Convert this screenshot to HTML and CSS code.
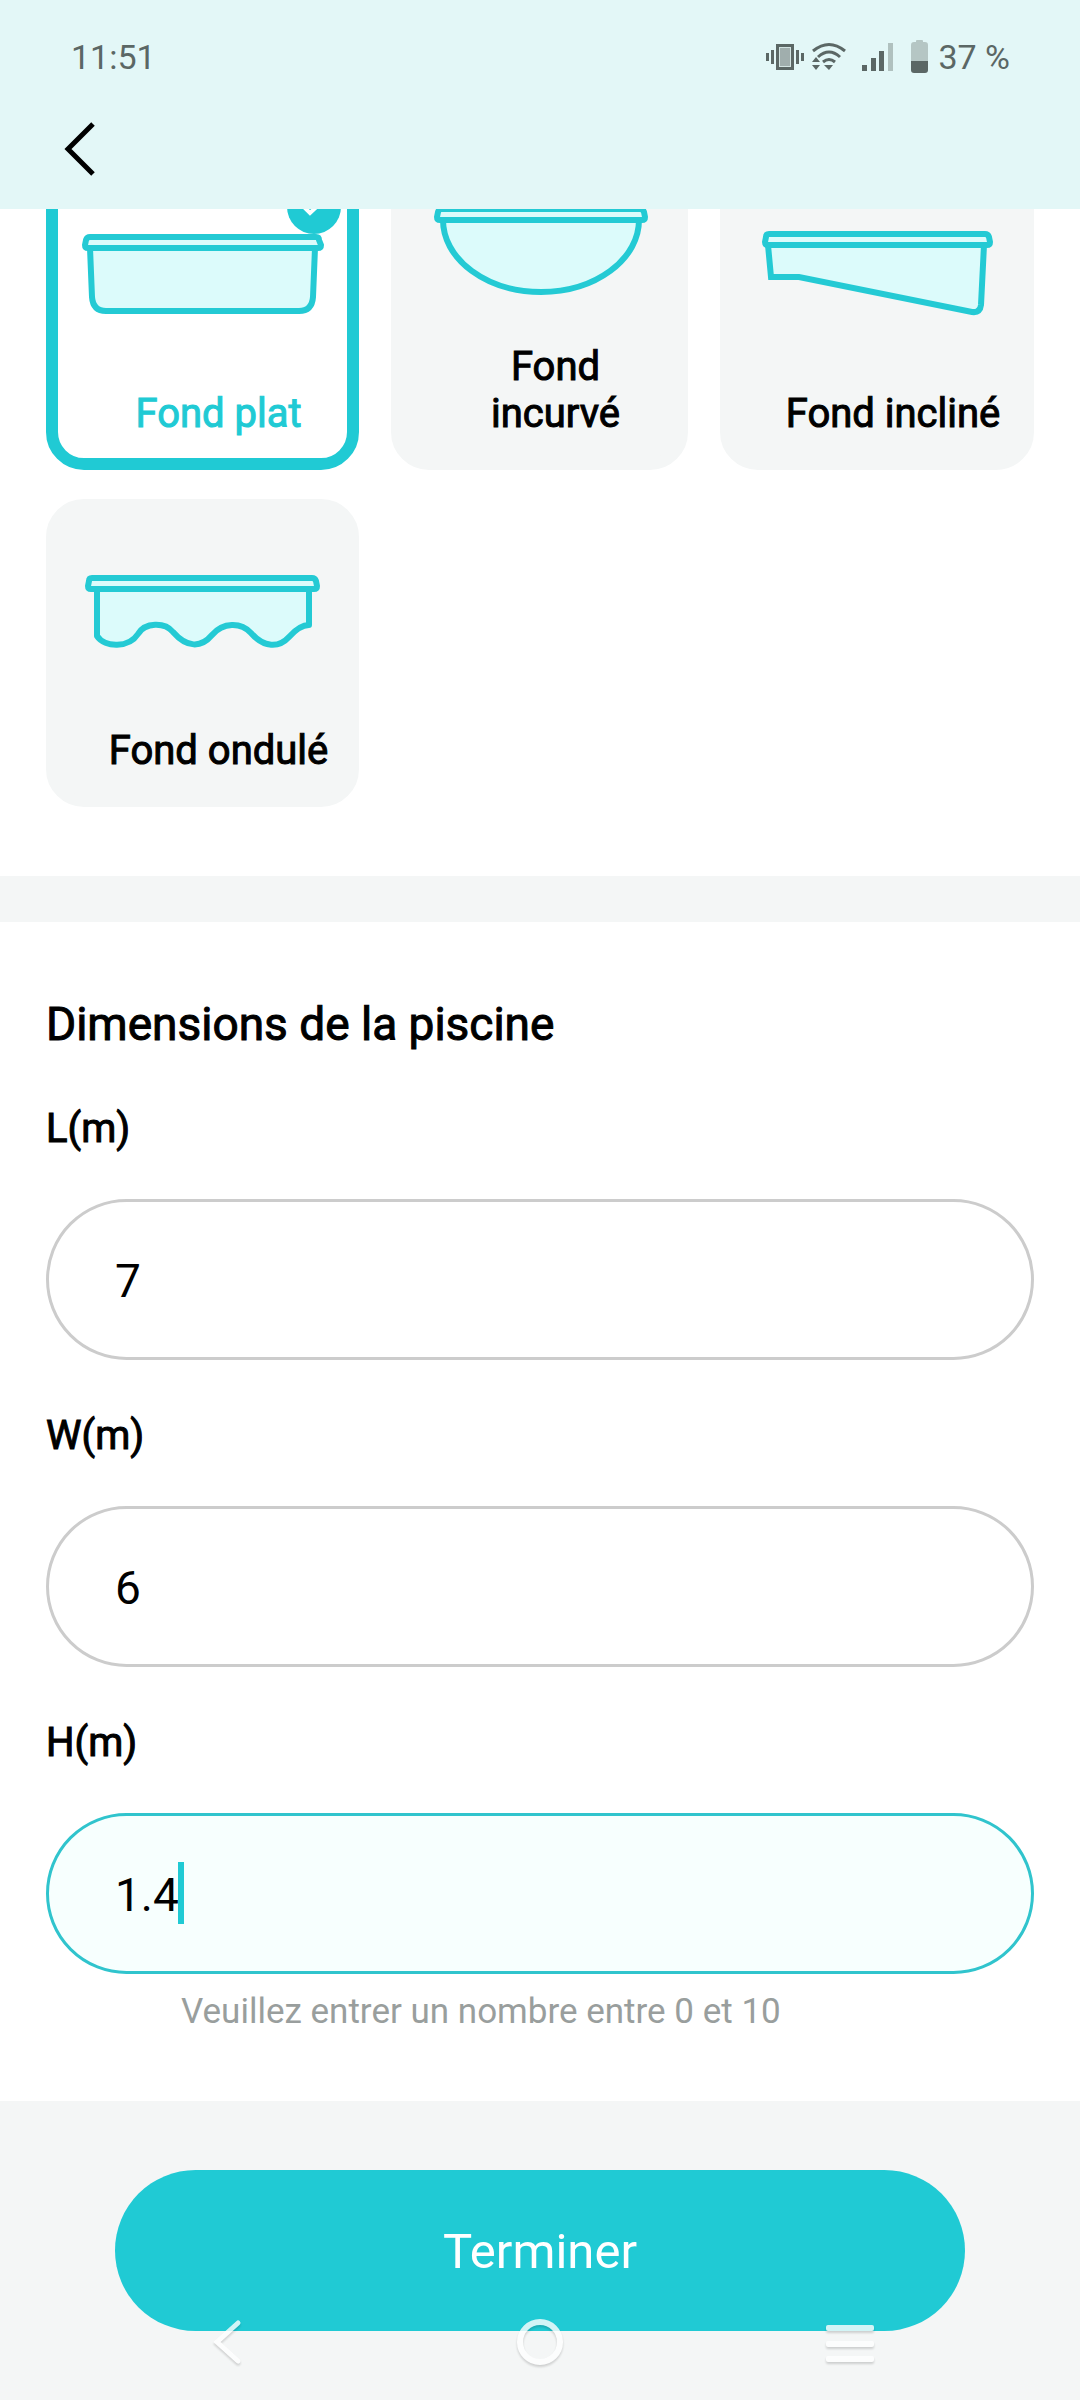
FILE: index.html
```html
<!DOCTYPE html>
<html lang="fr">
<head>
    <meta charset="UTF-8">
    <meta name="viewport" content="width=device-width, initial-scale=1.0">
    <title>Dimensions de la piscine</title>
    <link rel="stylesheet" href="styles.css">
</head>
<body>

    <header class="top-bar">
        <div class="status-bar">
            <span class="status-time">11:51</span>
            <div class="status-icons">
                <!-- vibrate -->
                <svg class="icon-vibrate" width="38" height="34" viewBox="0 0 38 34" fill="#5b6765">
                    <path d="M0 13h3v8H0zM5 10h3v14H5zM30 10h3v14h-3zM35 13h3v8h-3z"/>
                    <rect x="11.5" y="5.5" width="15" height="23" fill="#a0aead" stroke="#5b6765" stroke-width="3"/>
                    <rect x="13.5" y="7.5" width="11" height="19" fill="none" stroke="#d2e3e1"/>
                </svg>
                <!-- wifi -->
                <svg class="icon-wifi" width="34" height="34" viewBox="0 0 34 34" fill="none" stroke="#5b6765" stroke-width="3">
                    <path d="M1 11Q17-2 33 11M6 17Q17 7 28 17M11 22Q17 17 23 22"/>
                    <path d="M0 22l4-5 4 5zM0 25h8l-4 5zM12 25h9l-4 5z" fill="#5b6765" stroke="none"/>
                </svg>
                <!-- mobile signal -->
                <svg class="icon-signal" width="32" height="34" viewBox="0 0 32 34" fill="#5b6765">
                    <path d="M0 25h5v6H0zM9 18h5v13H9zM17 11h5v20h-5z"/>
                    <path d="M26 3h5v28h-5z" fill="#b0c1bf"/>
                </svg>
                <!-- battery -->
                <svg class="icon-battery" width="17" height="34" viewBox="0 0 17 34">
                    <path d="M5 2V1q0-1 1-1h5q1 0 1 1v1h2q3 0 3 3v16H0V5q0-3 3-3z" fill="#b5c6c4"/>
                    <path d="M0 21h17v9q0 3-3 3H3q-3 0-3-3z" fill="#5b6765"/>
                </svg>
                <span>37 %</span>
            </div>
        </div>
        <nav class="title-bar">
            <button class="back-btn" type="button" aria-label="Retour">
                <svg width="32" height="56" viewBox="0 0 32 56" fill="none" stroke="#000" stroke-width="5">
                    <path d="M29 3L4 28L29 53"/>
                </svg>
            </button>
        </nav>
    </header>

    <main>
        <section class="shapes">
            <label class="shape-card selected">
                <input type="radio" name="shape" value="flat" checked>
                <svg class="shape-img" width="260" height="132" viewBox="1 0 260 132">
                    <path d="M18 46L20 95Q21 109 34 109H227Q240 109 241 95L243 46Z"/>
                    <path d="M18 35H244Q247 35 247 38L249 43Q249 46 246 46H16Q13 46 13 43L14 38Q15 35 18 35Z"/>
                </svg>
                <span class="shape-name">Fond plat</span>
                <svg class="check" width="54" height="54" viewBox="0 0 54 54">
                    <circle cx="27" cy="27" r="27" fill="#20cad4"/>
                    <path d="M14 24L23 33L40 17" fill="none" stroke="#fff" stroke-width="4"/>
                </svg>
            </label>
            <label class="shape-card">
                <input type="radio" name="shape" value="curved">
                <svg class="shape-img" width="260" height="132" viewBox="0 0 260 132">
                    <path d="M33 18A98 72 0 0 0 229 18Z"/>
                    <path d="M31 7H230Q233 7 234 10L235 15Q235 18 232 18H30Q27 18 27 15L28 10Q29 7 31 7Z"/>
                </svg>
                <span class="shape-name">Fond incurvé</span>
            </label>
            <label class="shape-card">
                <input type="radio" name="shape" value="sloped">
                <svg class="shape-img" width="260" height="132" viewBox="0 0 260 132">
                    <path class="sharp" d="M21 43L24 75H52L225 110Q233 111 234 103L237 43Z"/>
                    <path d="M22 32H238Q241 32 242 35L243 40Q243 43 240 43H21Q18 43 18 40L19 35Q19 32 22 32Z"/>
                </svg>
                <span class="shape-name">Fond incliné</span>
            </label>
            <label class="shape-card">
                <input type="radio" name="shape" value="wavy">
                <svg class="shape-img" width="260" height="132" viewBox="1 0 260 132">
                    <path d="M25 50V97C33 109 57 109 66 95C73 83 93 83 101 93C115 109 129 109 140 96C151 83 169 83 179 94C192 109 207 109 217 98C225 89 231 86 237 86V50Z"/>
                    <path d="M20 39H240Q243 39 244 42L245 47Q245 50 242 50H19Q16 50 16 47L17 42Q17 39 20 39Z"/>
                </svg>
                <span class="shape-name">Fond ondulé</span>
            </label>
        </section>

        <form class="dimensions" id="dimensionsForm">
            <h2>Dimensions de la piscine</h2>

            <label class="field-label" for="poolLength">L(m)</label>
            <div class="field">
                <input type="text" inputmode="decimal" id="poolLength" value="7">
            </div>

            <label class="field-label" for="poolWidth">W(m)</label>
            <div class="field">
                <input type="text" inputmode="decimal" id="poolWidth" value="6">
            </div>

            <label class="field-label" for="poolHeight">H(m)</label>
            <div class="field active">
                <input type="text" inputmode="decimal" id="poolHeight" value="1.4" aria-describedby="heightHint">
                <span class="caret"></span>
            </div>
            <p class="hint" id="heightHint">Veuillez entrer un nombre entre 0 et 10</p>
        </form>
    </main>

    <footer class="bottom">
        <button class="submit-btn" type="submit" form="dimensionsForm">Terminer</button>

        <div class="system-nav">
            <button type="button" aria-label="Précédent">
                <svg width="56" height="56" viewBox="0 0 56 56" fill="none" stroke="#fff" stroke-width="5" stroke-linecap="round">
                    <path d="M38 9L17 28L38 47"/>
                </svg>
            </button>
            <button type="button" aria-label="Accueil">
                <svg width="56" height="56" viewBox="0 0 56 56" fill="none" stroke="#fff" stroke-width="6">
                    <circle cx="28" cy="28" r="20"/>
                </svg>
            </button>
            <button type="button" aria-label="Applications récentes">
                <svg width="56" height="56" viewBox="0 0 56 56" fill="#fff">
                    <rect x="2" y="11" width="48" height="6" rx="2"/>
                    <rect x="2" y="27" width="48" height="6" rx="2"/>
                    <rect x="2" y="42" width="48" height="6" rx="2"/>
                </svg>
            </button>
        </div>
    </footer>

</body>
</html>
```

FILE: styles.css
```css
* {
    box-sizing: border-box;
}
body {
    margin: 0;
    min-height: 100vh;
    display: flex;
    flex-direction: column;
    background-color: #fff;
    color: #000;
    font-family: Roboto, sans-serif;
}
button {
    padding: 0;
    border: none;
    background: none;
    font-family: inherit;
    cursor: pointer;
}
svg {
    display: block;
}

/* Header */
.top-bar {
    position: sticky;
    top: 0;
    z-index: 2;
    background-color: #e3f7f7;
}
.status-bar {
    display: flex;
    justify-content: space-between;
    align-items: center;
    padding: 37px 70px 12px 71px;
    color: #5b6765;
    font-size: 34px;
    line-height: 40px;
}
.status-icons {
    display: flex;
    align-items: center;
}
.icon-vibrate {
    margin-right: 8px;
}
.icon-wifi {
    margin-right: 16px;
}
.icon-signal {
    margin-right: 17px;
}
.icon-battery {
    margin-right: 10px;
}
.title-bar {
    display: flex;
    padding: 32px 64px;
}

/* Shape cards, partly scrolled under the header */
.shapes {
    display: grid;
    grid-template-columns: 313fr 297fr 314fr;
    gap: 29px 32px;
    margin-top: -47px;
    padding: 0 46px 69px;
    border-bottom: 46px solid #f4f6f6;
}
.shape-card {
    position: relative;
    display: flex;
    flex-direction: column;
    align-items: center;
    min-height: 308px;
    padding: 28px 0 21px;
    border: 12px solid #f4f6f6;
    border-radius: 38px;
    background-color: #f4f6f6;
    cursor: pointer;
}
.shape-card input {
    position: absolute;
    opacity: 0;
}
.shape-card.selected {
    border-color: #20cad4;
    background-color: #fff;
    color: #20cad4;
}
.shape-img {
    flex: none;
    fill: #dcfbfb;
    stroke: #24cad4;
    stroke-width: 6px;
    stroke-linejoin: round;
}
.shape-img .sharp {
    stroke-linejoin: miter;
}
.shape-name {
    margin-top: auto;
    padding: 0 12px 0 44px;
    text-align: center;
    font-size: 40px;
    line-height: 47px;
    -webkit-text-stroke: 1px currentColor;
}
.check {
    position: absolute;
    top: 6px;
    right: 6px;
}

/* Dimensions form */
.dimensions {
    padding: 75px 46px 0;
}
.dimensions h2 {
    margin: 0 0 54px;
    font-size: 46px;
    line-height: 54px;
    font-weight: 400;
    -webkit-text-stroke: 1px currentColor;
}
.field-label {
    display: block;
    margin-bottom: 46px;
    font-size: 40px;
    line-height: 48px;
    -webkit-text-stroke: 1px currentColor;
}
.field {
    position: relative;
    margin-bottom: 52px;
}
.field input {
    display: block;
    width: 100%;
    height: 161px;
    padding: 2px 66px 0;
    border: 3px solid #ccc;
    border-radius: 81px;
    outline: none;
    background-color: #fff;
    color: #000;
    font-family: inherit;
    font-size: 46px;
}
.field.active {
    margin-bottom: 17px;
}
.field.active input {
    border-color: #30c4cd;
    background-color: #f7fffe;
    caret-color: transparent;
}
.caret {
    position: absolute;
    top: 49px;
    left: 132px;
    width: 6px;
    height: 62px;
    background-color: #20cad4;
}
.hint {
    margin: 0;
    padding: 0 135px 68px;
    color: #999e9d;
    font-size: 35px;
    line-height: 42px;
}

/* Footer */
.bottom {
    position: relative;
    flex: 1;
    padding: 69px 115px;
    background-color: #f4f6f6;
}
.submit-btn {
    display: block;
    width: 100%;
    height: 161px;
    padding-top: 2px;
    border-radius: 81px;
    background-color: #20cad4;
    color: #fff;
    font-size: 49px;
}
.system-nav {
    position: absolute;
    left: 0;
    right: 0;
    bottom: 0;
    height: 116px;
    padding: 0 72px;
    display: grid;
    grid-template-columns: repeat(3, 1fr);
    place-items: center;
}
.system-nav svg {
    opacity: 0.8;
    filter: drop-shadow(0 2px 1px rgba(0, 0, 0, 0.2));
}
```
